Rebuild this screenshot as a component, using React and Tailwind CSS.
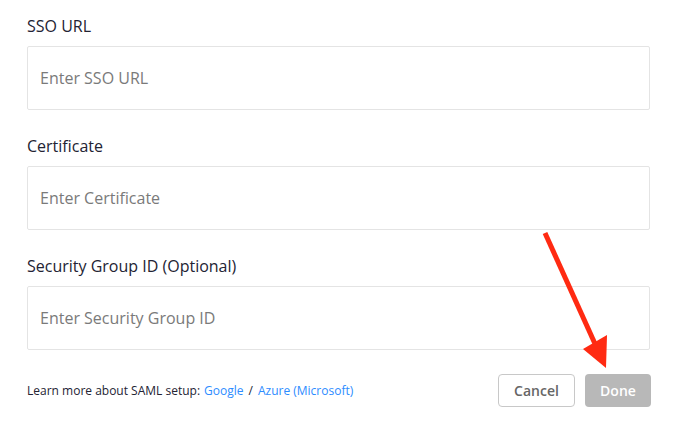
import React from 'react';

const fields = [
  { label: 'SSO URL', placeholder: 'Enter SSO URL' },
  { label: 'Certificate', placeholder: 'Enter Certificate' },
  { label: 'Security Group ID (Optional)', placeholder: 'Enter Security Group ID' },
];

export default function App() {
  return (
    <div className="relative w-[678px] h-[426px] bg-white overflow-hidden" style={{ fontFamily: '"Open Sans", sans-serif' }}>
      <div className="px-[27px] pt-[14px] w-[678px]">
        {fields.map((f) => (
          <div key={f.label} className="mb-[24px]">
            <label className="block text-[16px] leading-[24px] text-[#232333] mb-[8px]">{f.label}</label>
            <input
              placeholder={f.placeholder}
              className="w-[623px] h-[64px] border border-[#e4e4e4] rounded-[2px] px-[12px] text-[16px] text-[#232333] placeholder:text-[#7a7a7a] outline-none"
            />
          </div>
        ))}
        <div className="flex items-center justify-between">
          <div className="text-[12px] text-[#232333] flex items-center">
            <span>Learn more about SAML setup:</span>
            <a className="ml-[4px] text-[#2d8cff]">Google</a>
            <span className="mx-[5px]">/</span>
            <a className="text-[#2d8cff]">Azure (Microsoft)</a>
          </div>
          <div className="flex gap-[10px]">
            <button className="w-[77px] h-[33px] rounded-[4px] border border-[#c8c8c8] bg-white text-[14px] font-semibold text-[#666666]">Cancel</button>
            <button className="w-[66px] h-[33px] rounded-[4px] bg-[#b8b8b8] text-[14px] font-semibold text-white">Done</button>
          </div>
        </div>
      </div>
      <svg className="absolute left-0 top-0 pointer-events-none" width="678" height="426">
        <line x1="545" y1="233" x2="596" y2="346" stroke="#ff2a12" strokeWidth="5" />
        <polygon points="606,368 583,349 607,335" fill="#ff2a12" />
      </svg>
    </div>
  );
}
